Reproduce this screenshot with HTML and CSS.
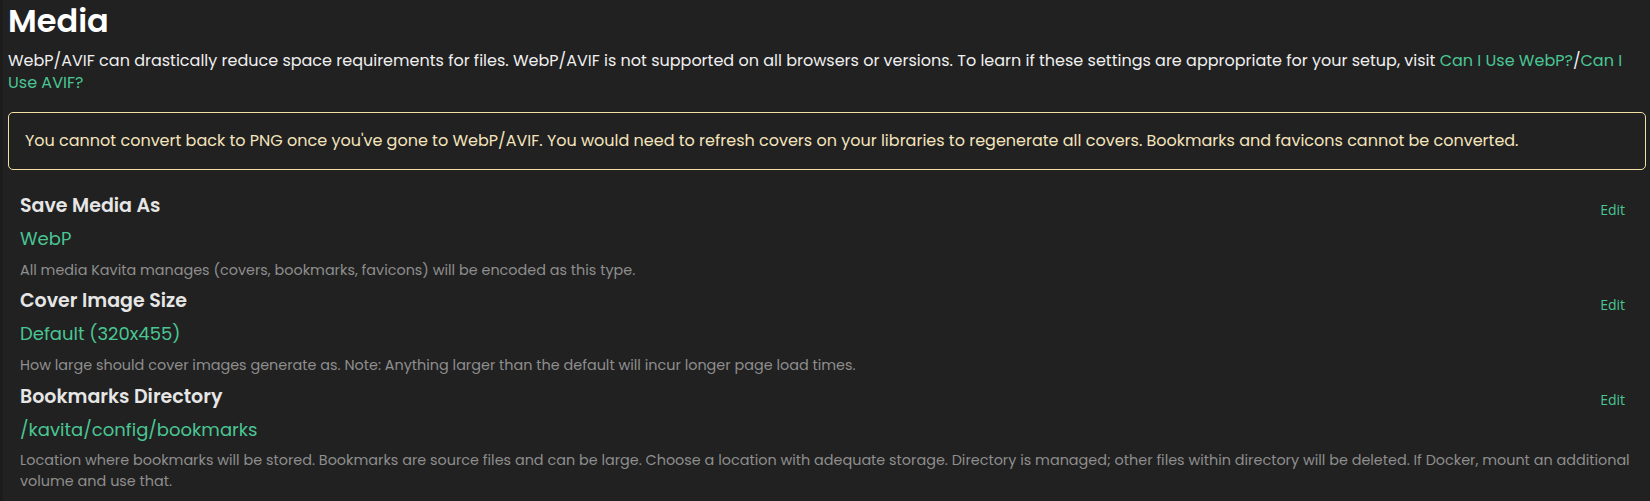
FILE: index.html
```html
<!DOCTYPE html>
<html lang="en">
<head>
<meta charset="utf-8">
<title>Media</title>
<link rel="stylesheet" href="styles.css">
</head>
<body>
<div class="page">
  <h2 class="page-title">Media</h2>
  <p class="intro">WebP/AVIF can drastically reduce space requirements for files. WebP/AVIF is not supported on all browsers or versions. To learn if these settings are appropriate for your setup, visit <a class="link" href="#">Can I Use WebP?</a>/<a class="link" href="#">Can I Use AVIF?</a></p>
  <div class="alert">You cannot convert back to PNG once you've gone to WebP/AVIF. You would need to refresh covers on your libraries to regenerate all covers. Bookmarks and favicons cannot be converted.</div>
  <div class="settings">
    <div class="setting">
      <div class="setting-head"><span class="setting-title">Save Media As</span><button class="edit">Edit</button></div>
      <div class="setting-value">WebP</div>
      <div class="setting-desc">All media Kavita manages (covers, bookmarks, favicons) will be encoded as this type.</div>
    </div>
    <div class="setting">
      <div class="setting-head"><span class="setting-title">Cover Image Size</span><button class="edit">Edit</button></div>
      <div class="setting-value">Default (320x455)</div>
      <div class="setting-desc">How large should cover images generate as. Note: Anything larger than the default will incur longer page load times.</div>
    </div>
    <div class="setting">
      <div class="setting-head"><span class="setting-title">Bookmarks Directory</span><button class="edit">Edit</button></div>
      <div class="setting-value">/kavita/config/bookmarks</div>
      <div class="setting-desc">Location where bookmarks will be stored. Bookmarks are source files and can be large. Choose a location with adequate storage. Directory is managed; other files within directory will be deleted. If Docker, mount an additional volume and use that.</div>
    </div>
  </div>
</div>
</body>
</html>
```

FILE: styles.css
```css
html, body {
  margin: 0;
  padding: 0;
  background: #212121;
}

body {
  border-left: 3px solid #1c1c1c;
  font-family: "Poppins", "Inter", sans-serif;
  color: #efefef;
}

.page {
  padding: 0 4px 0 5px;
}

.page-title {
  margin: 0;
  font-size: 32px;
  line-height: 42px;
  font-weight: 600;
  color: #ffffff;
}

.intro {
  margin: 8px 0 0 0;
  font-size: 16px;
  line-height: 22.4px;
  color: #efefef;
}

.link {
  color: #4ac694;
  text-decoration: none;
}

.alert {
  margin-top: 17.3px;
  border: 1px solid #f3dea4;
  border-radius: 5px;
  padding: 16px;
  font-size: 16px;
  line-height: 24px;
  color: #f4e4bd;
}

.settings {
  margin-top: 24px;
  padding: 0 12px 0 12px;
}

.setting {
  padding-bottom: 8.9px;
}

.setting-head {
  display: flex;
  justify-content: space-between;
  align-items: center;
  height: 24px;
}

.setting-title {
  font-size: 19px;
  line-height: 24px;
  font-weight: 600;
  color: #e6e6e6;
}

.edit {
  background: none;
  border: none;
  padding: 0;
  margin: 6px 9px 0 0;
  font-family: "Open Sans", sans-serif;
  font-size: 14px;
  color: #4ac694;
  cursor: pointer;
}

.setting-value {
  margin-top: 7.7px;
  font-size: 18px;
  line-height: 26px;
  color: #4ac694;
}

.setting-desc {
  margin-top: 7.8px;
  font-size: 14.4px;
  line-height: 21px;
  color: #8e8e8e;
}
```
